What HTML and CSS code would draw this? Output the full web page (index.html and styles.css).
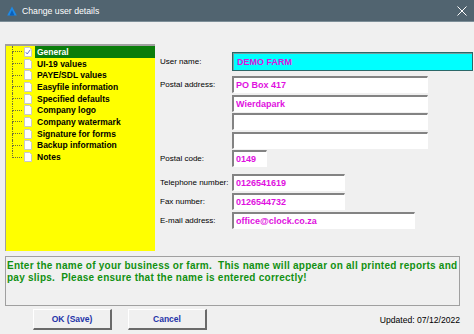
FILE: index.html
```html
<!DOCTYPE html>
<html lang="en">
<head>
  <meta charset="UTF-8">
  <meta name="viewport" content="width=device-width, initial-scale=1.0">
  <title>Change user details</title>
  <link rel="stylesheet" href="styles.css">
</head>
<body>
  <div class="window">
    <!-- Title bar -->
    <div class="titlebar">
      <svg class="app-icon" width="10" height="10" viewBox="0 0 10 10">
        <polygon points="5,0.5 9.8,9.5 0.2,9.5" fill="#1e8ae6"/>
        <polygon points="5,4 7.5,9.5 2.5,9.5" fill="#0b5fb8"/>
      </svg>
      <span class="title">Change user details</span>
      <svg class="close-icon" width="10" height="10" viewBox="0 0 10 10">
        <path d="M0.5 0.5 L9.5 9.5 M9.5 0.5 L0.5 9.5" stroke="#fff" stroke-width="1"/>
      </svg>
    </div>

    <div class="content">
      <div class="main">
        <!-- Section tree -->
        <ul class="tree">
          <li class="node selected"><span class="branch"><span class="up"></span><span class="down"></span></span><svg class="page" width="8" height="10" viewBox="0 0 8 10"><path d="M0.5 0.5 H5.5 L7.5 2.5 V9.5 H0.5 Z" fill="#fff" stroke="#c8c8c8"/><path d="M1.8 5.2 L3.2 7 L6.2 2.8" fill="none" stroke="#5a6ad0" stroke-width="0.9"/></svg><span class="label">General</span></li>
          <li class="node"><span class="branch"><span class="up"></span><span class="down"></span></span><svg class="page" width="8" height="10" viewBox="0 0 8 10"><path d="M0.5 0.5 H5.5 L7.5 2.5 V9.5 H0.5 Z" fill="#fff" stroke="#c8c8c8"/></svg><span class="label">UI-19 values</span></li>
          <li class="node"><span class="branch"><span class="up"></span><span class="down"></span></span><svg class="page" width="8" height="10" viewBox="0 0 8 10"><path d="M0.5 0.5 H5.5 L7.5 2.5 V9.5 H0.5 Z" fill="#fff" stroke="#c8c8c8"/></svg><span class="label">PAYE/SDL values</span></li>
          <li class="node"><span class="branch"><span class="up"></span><span class="down"></span></span><svg class="page" width="8" height="10" viewBox="0 0 8 10"><path d="M0.5 0.5 H5.5 L7.5 2.5 V9.5 H0.5 Z" fill="#fff" stroke="#c8c8c8"/></svg><span class="label">Easyfile information</span></li>
          <li class="node"><span class="branch"><span class="up"></span><span class="down"></span></span><svg class="page" width="8" height="10" viewBox="0 0 8 10"><path d="M0.5 0.5 H5.5 L7.5 2.5 V9.5 H0.5 Z" fill="#fff" stroke="#c8c8c8"/></svg><span class="label">Specified defaults</span></li>
          <li class="node"><span class="branch"><span class="up"></span><span class="down"></span></span><svg class="page" width="8" height="10" viewBox="0 0 8 10"><path d="M0.5 0.5 H5.5 L7.5 2.5 V9.5 H0.5 Z" fill="#fff" stroke="#c8c8c8"/></svg><span class="label">Company logo</span></li>
          <li class="node"><span class="branch"><span class="up"></span><span class="down"></span></span><svg class="page" width="8" height="10" viewBox="0 0 8 10"><path d="M0.5 0.5 H5.5 L7.5 2.5 V9.5 H0.5 Z" fill="#fff" stroke="#c8c8c8"/></svg><span class="label">Company watermark</span></li>
          <li class="node"><span class="branch"><span class="up"></span><span class="down"></span></span><svg class="page" width="8" height="10" viewBox="0 0 8 10"><path d="M0.5 0.5 H5.5 L7.5 2.5 V9.5 H0.5 Z" fill="#fff" stroke="#c8c8c8"/></svg><span class="label">Signature for forms</span></li>
          <li class="node"><span class="branch"><span class="up"></span><span class="down"></span></span><svg class="page" width="8" height="10" viewBox="0 0 8 10"><path d="M0.5 0.5 H5.5 L7.5 2.5 V9.5 H0.5 Z" fill="#fff" stroke="#c8c8c8"/></svg><span class="label">Backup information</span></li>
          <li class="node last"><span class="branch"><span class="up"></span><span class="down"></span></span><svg class="page" width="8" height="10" viewBox="0 0 8 10"><path d="M0.5 0.5 H5.5 L7.5 2.5 V9.5 H0.5 Z" fill="#fff" stroke="#c8c8c8"/></svg><span class="label">Notes</span></li>
        </ul>

        <!-- Details form -->
        <div class="form">
          <div class="row row-name">
            <span class="field-label">User name:</span>
            <input class="field field-name" type="text" value="DEMO FARM">
          </div>
          <div class="row">
            <span class="field-label">Postal address:</span>
            <input class="field field-address" type="text" value="PO Box 417">
          </div>
          <div class="row">
            <span class="field-label"></span>
            <input class="field field-address" type="text" value="Wierdapark">
          </div>
          <div class="row">
            <span class="field-label"></span>
            <input class="field field-address" type="text" value="">
          </div>
          <div class="row">
            <span class="field-label"></span>
            <input class="field field-address" type="text" value="">
          </div>
          <div class="row row-code">
            <span class="field-label">Postal code:</span>
            <input class="field field-code" type="text" value="0149">
          </div>
          <div class="row row-tel">
            <span class="field-label">Telephone number:</span>
            <input class="field field-phone" type="text" value="0126541619">
          </div>
          <div class="row row-fax">
            <span class="field-label">Fax number:</span>
            <input class="field field-phone" type="text" value="0126544732">
          </div>
          <div class="row">
            <span class="field-label">E-mail address:</span>
            <input class="field field-email" type="text" value="office@clock.co.za">
          </div>
        </div>
      </div>

      <!-- Help text -->
      <div class="hint">Enter the name of your business or farm.  This name will appear on all printed reports and pay slips.  Please ensure that the name is entered correctly!</div>

      <div class="footer">
        <button class="btn">OK (Save)</button>
        <button class="btn">Cancel</button>
        <span class="updated">Updated: 07/12/2022</span>
      </div>
    </div>
  </div>
</body>
</html>
```

FILE: styles.css
```css
* {
  margin: 0;
  padding: 0;
  box-sizing: border-box;
}

body {
  font-family: 'Liberation Sans', Arial, sans-serif;
  background-color: #f0f0f0;
  width: 474px;
  height: 334px;
  overflow: hidden;
}

.window {
  display: flex;
  flex-direction: column;
  height: 100%;
  background-color: #f0f0f0;
}

/* Title bar */
.titlebar {
  height: 22px;
  background-color: #516470;
  display: flex;
  align-items: center;
  padding: 0 7px;
  color: #fff;
  border-bottom: 1px solid #7d8e98;
}

.app-icon {
  flex: none;
  margin-right: 5px;
}

.title {
  font-size: 8.7px;
  flex: 1;
}

.close-icon {
  flex: none;
}

/* Body */
.content {
  flex: 1;
  display: flex;
  flex-direction: column;
  padding: 0 14px 0 5px;
}

.main {
  display: flex;
  align-items: flex-start;
  margin-top: 22px;
}

/* Tree panel */
.tree {
  list-style: none;
  flex: none;
  width: 150px;
  height: 207px;
  background-color: #ffff00;
  border-top: 2px solid #a0a0a0;
  border-left: 1px solid #a0a0a0;
}

.node {
  display: flex;
  align-items: center;
  height: 11.7px;
  font-size: 8.5px;
  font-weight: bold;
  color: #000;
}

.branch {
  flex: none;
  align-self: stretch;
  display: flex;
  flex-direction: column;
  width: 10px;
  margin-left: 6px;
}

.branch .up {
  flex: 1;
  border-left: 1px dotted #6e6e3a;
  border-bottom: 1px dotted #6e6e3a;
}

.branch .down {
  flex: 1;
  border-left: 1px dotted #6e6e3a;
}

.node.last .down {
  border-left: none;
}

.page {
  flex: none;
  margin: 0 3px 0 2px;
}

.label {
  flex: 1;
  align-self: stretch;
  display: flex;
  align-items: center;
  padding-left: 2px;
}

.node.selected .label {
  background-color: #0a7d0a;
  color: #fff;
}

/* Form */
.form {
  flex: 1;
  margin-left: 5px;
  padding-top: 8px;
  display: flex;
  flex-direction: column;
}

.row {
  display: flex;
  align-items: center;
  margin-bottom: 1.5px;
}

.row-name {
  margin-bottom: 5px;
}

.row-code {
  margin-bottom: 7px;
}

.row-tel {
  margin-bottom: 2px;
}

.field-label {
  flex: none;
  width: 72px;
  font-size: 8px;
  color: #000;
}

.field {
  flex: none;
  height: 17px;
  font-family: 'Liberation Sans', Arial, sans-serif;
  font-size: 9px;
  font-weight: bold;
  color: #e010e0;
  background-color: #fff;
  border-top: 2px solid #838383;
  border-left: 2px solid #838383;
  border-right: 1px solid #fff;
  border-bottom: 1px solid #fff;
  padding: 0 2px;
  outline: none;
}

.field-name {
  width: 241px;
  height: 19px;
  background-color: #00ffff;
  border: 1px solid #2b6868;
  box-shadow: inset 1px 1px 0 #6f9f9f;
  padding-left: 4px;
}

.field-address {
  width: 196px;
}

.field-code {
  width: 35px;
}

.field-phone {
  width: 113px;
}

.field-email {
  width: 183px;
}

/* Help text */
.hint {
  margin-top: 5px;
  height: 50px;
  border: 1px solid #a0a0a0;
  padding: 3px 1px;
  font-size: 10px;
  letter-spacing: 0.25px;
  font-weight: bold;
  line-height: 11.5px;
  color: #129012;
  white-space: pre-wrap;
}

/* Footer */
.footer {
  display: flex;
  align-items: center;
  margin-top: 3px;
  padding-left: 28px;
}

.btn {
  width: 79px;
  height: 21px;
  margin-right: 16px;
  background-color: #f0f0f0;
  border-top: 1px solid #fff;
  border-left: 1px solid #fff;
  border-right: 2px solid #6a6a6a;
  border-bottom: 2px solid #6a6a6a;
  font-family: 'Liberation Sans', Arial, sans-serif;
  font-size: 8.5px;
  font-weight: bold;
  color: #2433a8;
}

.updated {
  margin-left: auto;
  font-size: 8.6px;
  color: #000;
}
```
